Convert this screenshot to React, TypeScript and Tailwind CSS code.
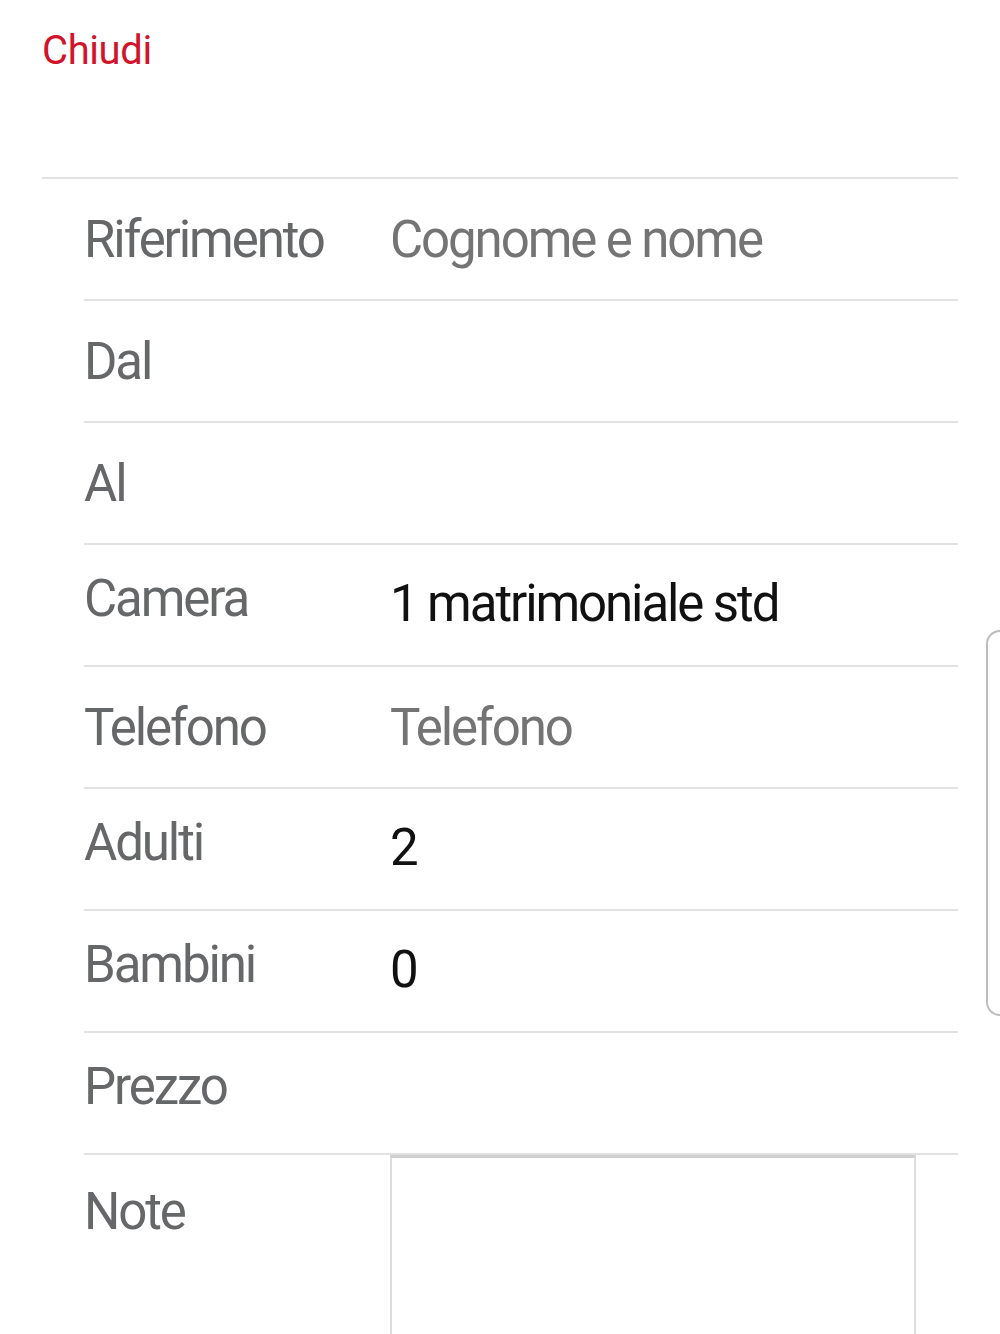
import React from "react";

type Row = {
  label: string;
  value?: string;
  placeholder?: boolean;
  shift?: boolean;
};

const rows: Row[] = [
  { label: "Riferimento", value: "Cognome e nome", placeholder: true },
  { label: "Dal" },
  { label: "Al" },
  { label: "Camera", value: "1 matrimoniale std", shift: true },
  { label: "Telefono", value: "Telefono", placeholder: true },
  { label: "Adulti", value: "2", shift: true },
  { label: "Bambini", value: "0", shift: true },
  { label: "Prezzo", shift: true },
];

const App = () => {
  return (
    <div
      className="relative w-[1000px] h-[1334px] overflow-hidden bg-white"
      style={{ fontFamily: "Roboto, 'Noto Sans', sans-serif" }}
    >
      <div className="pl-[42px] pt-[31px] h-[177px]">
        <button className="text-[40px] leading-none tracking-[-0.4px] text-[#d0142c]">Chiudi</button>
      </div>

      <div className="ml-[42px] w-[916px] h-[2px] bg-[#e2e2e2]" />

      <div className="ml-[84px] w-[874px]">
        {rows.map((row) => (
          <div key={row.label}>
            <div className="flex items-center h-[120px]">
              <span
                className={`w-[306px] text-[51px] leading-none tracking-[-2.1px] text-[#666769] ${
                  row.shift ? "mb-[14px]" : ""
                }`}
              >
                {row.label}
              </span>
              {row.value && (
                <span
                  className={`text-[51px] leading-none tracking-[-2.1px] ${
                    row.placeholder ? "text-[#747474]" : "text-[#111111] mt-[-4px]"
                  }`}
                >
                  {row.value}
                </span>
              )}
            </div>
            <div className="h-[2px] bg-[#e2e2e2]" />
          </div>
        ))}

        <div className="flex">
          <span className="w-[306px] pt-[31px] text-[51px] leading-none tracking-[-2.1px] text-[#666769]">
            Note
          </span>
          <textarea
            className="w-[526px] h-[300px] border-2 border-[#dcdcdc] border-t-[3px] border-t-[#cfcfcf] bg-white resize-none outline-none"
          />
        </div>
      </div>

      {/* edge panel handle */}
      <div className="absolute right-[-10px] top-[630px] w-[24px] h-[386px] rounded-l-[14px] border-2 border-[#bdbdbd] bg-white" />
    </div>
  );
};

export default App;
